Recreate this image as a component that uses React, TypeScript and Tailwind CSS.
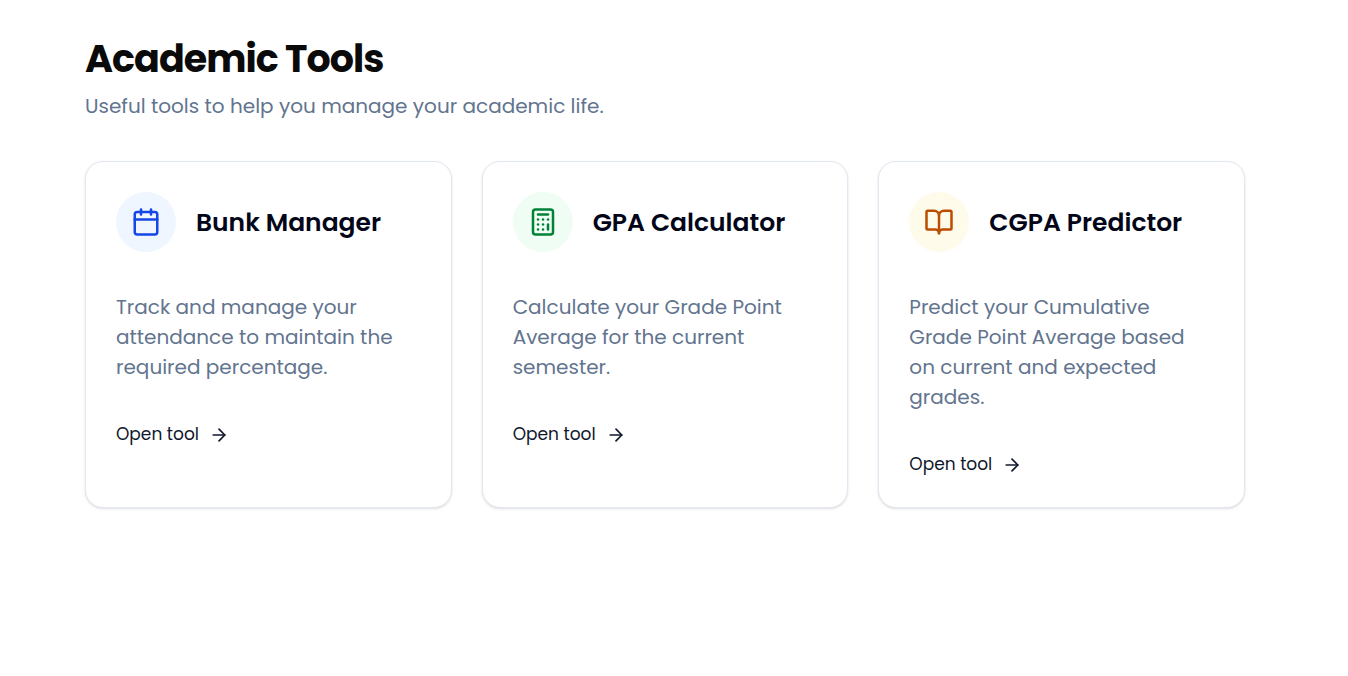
import { ArrowRight, BookOpen, Calculator, Calendar } from "lucide-react";
import type { LucideIcon } from "lucide-react";

type Tool = {
  title: string;
  description: string;
  icon: LucideIcon;
  tone: string;
};

const tools: Tool[] = [
  {
    title: "Bunk Manager",
    description:
      "Track and manage your attendance to maintain the required percentage.",
    icon: Calendar,
    tone: "bg-blue-50 text-blue-700",
  },
  {
    title: "GPA Calculator",
    description: "Calculate your Grade Point Average for the current semester.",
    icon: Calculator,
    tone: "bg-green-50 text-green-700",
  },
  {
    title: "CGPA Predictor",
    description:
      "Predict your Cumulative Grade Point Average based on current and expected grades.",
    icon: BookOpen,
    tone: "bg-amber-50 text-amber-700",
  },
];

function ToolCard({ title, description, icon: Icon, tone }: Tool) {
  return (
    <article className="rounded-[18px] border border-slate-200 bg-white p-[30px] text-slate-950 shadow-sm">
      <div className="flex items-center gap-5">
        <div
          className={`flex size-[60px] shrink-0 items-center justify-center rounded-full ${tone}`}
        >
          <Icon size={30} aria-hidden="true" />
        </div>
        <h2 className="text-[25px] leading-[35px] font-semibold whitespace-nowrap">
          {title}
        </h2>
      </div>
      <p className="mt-10 text-[20px] leading-[30px] text-slate-500">
        {description}
      </p>
      <a
        href="#"
        className="mt-10 flex w-fit items-center gap-[10px] text-[17px] leading-[25px] text-slate-900"
      >
        Open tool
        <ArrowRight size={20} aria-hidden="true" />
      </a>
    </article>
  );
}

export default function App() {
  return (
    <main className="min-h-screen bg-white py-9 pr-[103px] pl-[85px] font-[Poppins,Inter,sans-serif]">
      <header>
        <h1 className="text-[38px] leading-[45px] font-bold tracking-tight text-neutral-950">
          Academic Tools
        </h1>
        <p className="mt-[10px] text-[20px] leading-[30px] text-slate-500">
          Useful tools to help you manage your academic life.
        </p>
      </header>
      <section className="mt-10 grid grid-cols-3 gap-[30px]">
        {tools.map((tool) => (
          <ToolCard key={tool.title} {...tool} />
        ))}
      </section>
    </main>
  );
}
